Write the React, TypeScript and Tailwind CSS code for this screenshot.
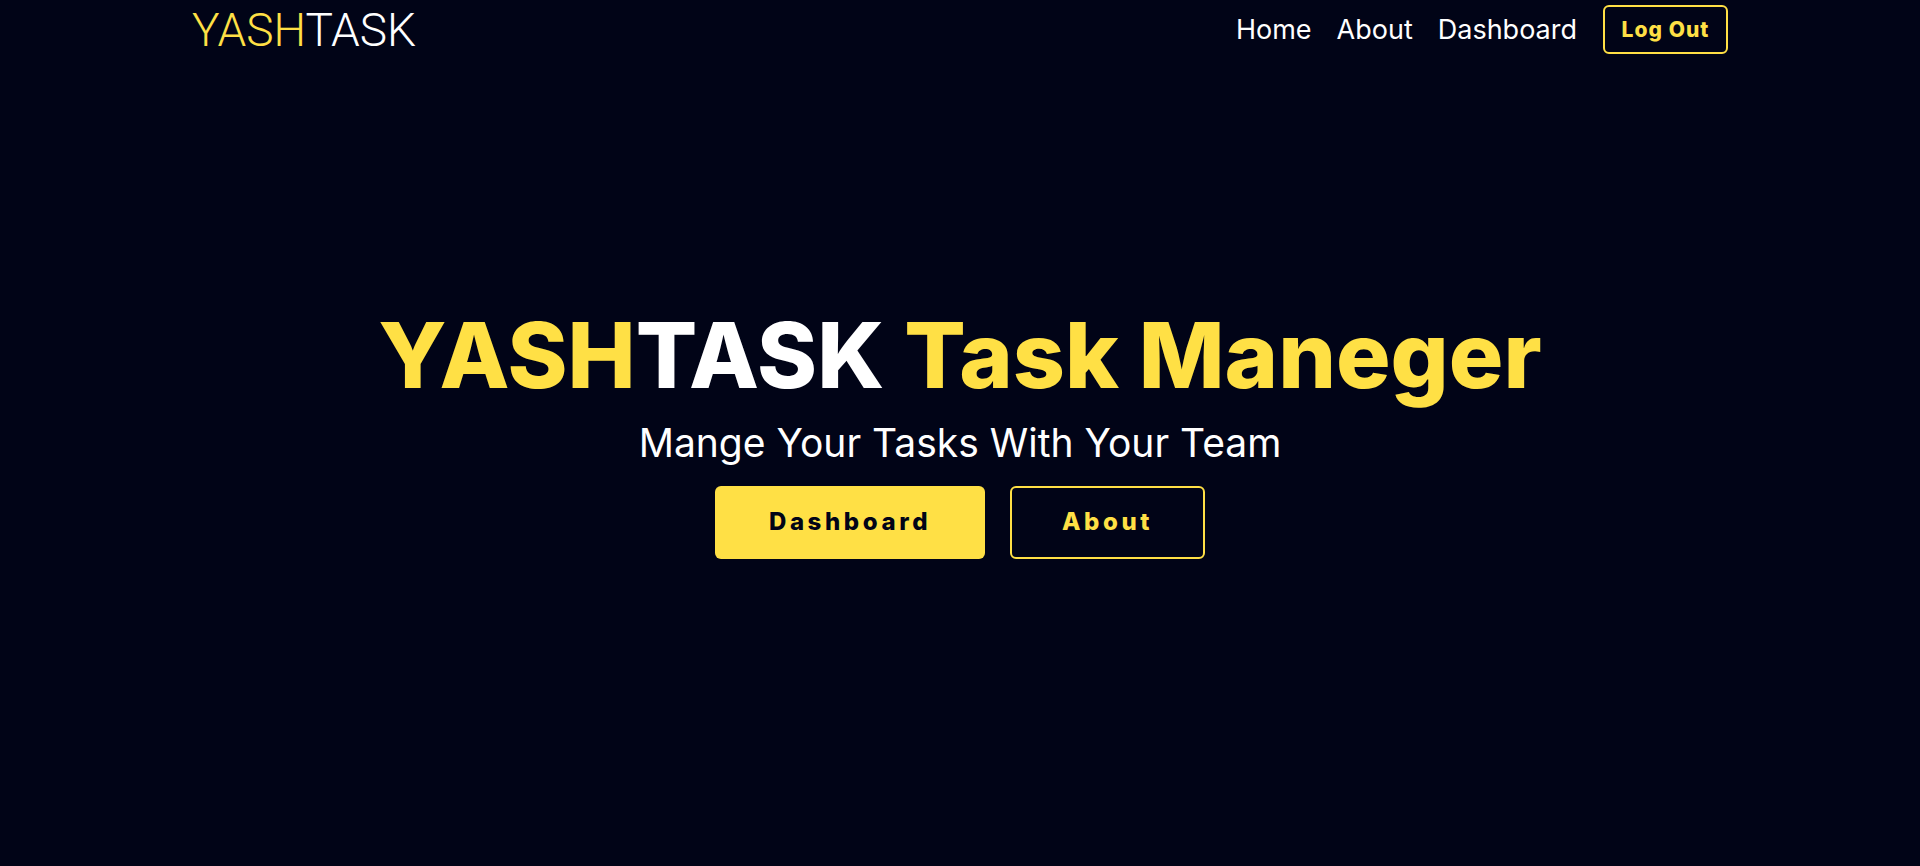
import React from 'react';

const NavLink: React.FC<{ label: string }> = ({ label }) => (
  <a href="#" className="text-white text-[27px] leading-none hover:text-[#ffe045] transition-colors">
    {label}
  </a>
);

export default function App() {
  return (
    <div className="min-h-screen w-full bg-[#010417] font-['Inter',sans-serif] text-white">
      <nav className="max-w-[1536px] mx-auto h-[59px] flex items-center justify-between">
        <div className="font-['Roboto',sans-serif] text-[46px] leading-none font-light">
          <span className="text-[#ffe045]">YASH</span>
          <span className="text-white">TASK</span>
        </div>
        <div className="flex items-center gap-[25px]">
          <NavLink label="Home" />
          <NavLink label="About" />
          <NavLink label="Dashboard" />
          <button className="ml-[1px] h-[49px] w-[125px] rounded-md border-2 border-[#ffe045] text-[#ffe045] font-extrabold text-[21px] tracking-wider">
            Log Out
          </button>
        </div>
      </nav>

      <main className="flex flex-col items-center pt-[246px]">
        <h1 className="text-[91px] leading-[1.1] font-extrabold">
          <span className="text-[#ffe045]">YASH</span>
          <span className="text-white">TASK</span>{' '}
          <span className="text-[#ffe045]">Task Maneger</span>
        </h1>
        <p className="mt-[14px] text-[39px] leading-tight text-white">Mange Your Tasks With Your Team</p>
        <div className="mt-[18px] flex gap-[25px]">
          <button className="w-[270px] h-[73px] rounded-md bg-[#ffe045] text-[#010417] font-extrabold text-[24px] tracking-[0.15em]">
            Dashboard
          </button>
          <button className="w-[195px] h-[73px] rounded-md border-2 border-[#ffe045] text-[#ffe045] font-extrabold text-[24px] tracking-[0.15em]">
            About
          </button>
        </div>
      </main>
    </div>
  );
}
